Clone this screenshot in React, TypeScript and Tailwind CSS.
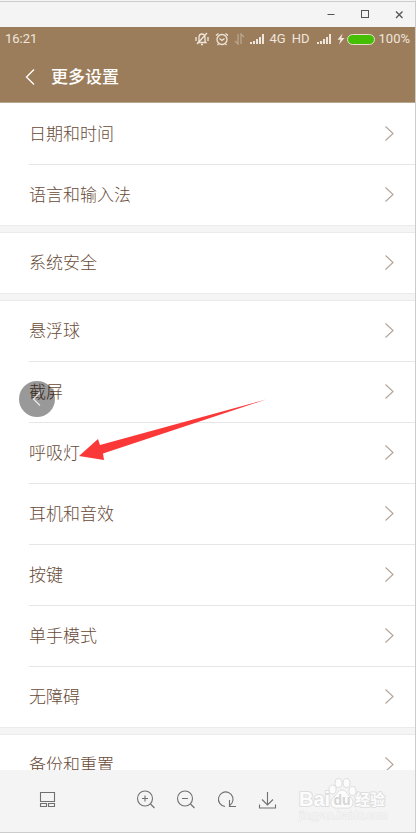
import type { ReactNode } from "react";

const groups = [
  ["日期和时间", "语言和输入法"],
  ["系统安全"],
  ["悬浮球", "截屏", "呼吸灯", "耳机和音效", "按键", "单手模式", "无障碍"],
  ["备份和重置"]
];

function WindowBar() {
  return (
    <div className="flex h-[26px] shrink-0 items-center justify-end border-t border-[#cccccc] bg-[#f4f4f4] pr-2 text-[#555555]">
      <button type="button" aria-label="Minimize" className="mr-[18px]">
        <svg className="h-4 w-4" viewBox="0 0 16 16" fill="none" stroke="currentColor">
          <path d="M4.5 7.5h7" />
        </svg>
      </button>
      <button type="button" aria-label="Maximize" className="mr-[18px]">
        <svg className="h-4 w-4" viewBox="0 0 16 16" fill="none" stroke="currentColor">
          <rect x="4.5" y="3.5" width="7" height="7" />
        </svg>
      </button>
      <button type="button" aria-label="Close">
        <svg className="h-4 w-4" viewBox="0 0 16 16" fill="none" stroke="currentColor" strokeWidth="1.3">
          <path d="m5 4.5 6.500 6.500M11.500 4.500 5 11" />
        </svg>
      </button>
    </div>
  );
}

function Signal() {
  return (
    <svg className="h-3 w-[15px]" viewBox="0 0 15 12" fill="currentColor">
      <path d="M0 9h2v2H0zM3 8h2v3H3zM6 6h2v5H6zM9 4h2v7H9zM12 1h2v10h-2z" />
    </svg>
  );
}

function StatusBar() {
  return (
    <div className="flex h-6 items-center pl-[5px] pr-[5px] text-[13px] text-[#efe6db]">
      <span>16:21</span>
      <div className="ml-auto flex items-center">
        <svg className="h-[14px] w-[14px]" viewBox="0 0 14 14" fill="none" stroke="currentColor" strokeWidth="1.3">
          <path d="M3 10.5h8L10 9V5.500C10 3.500 9 2 7 2S4 3.500 4 5.500V9l-1 1.500ZM6 12.500h2M12 1 2 12M1 5v4M13 5v4" />
        </svg>
        <svg className="ml-[6px] h-[14px] w-[14px]" viewBox="0 0 14 14" fill="none" stroke="currentColor" strokeWidth="1.3">
          <circle cx="7" cy="7.500" r="5" />
          <path d="M4.500 6.500 7 8.500l2.500-2M1 3.500 3.500 1.500M13 3.500l-2.500-2M3.500 12l-1 1M10.500 12l1 1" />
        </svg>
        <svg className="ml-[5px] h-3 w-[11px] opacity-40" viewBox="0 0 11 12" fill="none" stroke="currentColor" strokeWidth="1.3">
          <path d="M4 1v10L1 8M7 11V1l3 3" />
        </svg>
        <span className="ml-[5px]">
          <Signal />
        </span>
        <span className="ml-[5px]">4G</span>
        <span className="ml-1.5">HD</span>
        <span className="ml-[7px]">
          <Signal />
        </span>
        <svg className="ml-[5px] h-3 w-[8px]" viewBox="0 0 8 12" fill="currentColor">
          <path d="M5.500 0.500 0.500 6.800h3L2 11.500l5.500-6.500H4.400L5.500 0.500Z" />
        </svg>
        <span className="ml-0.5 h-[11px] w-7 rounded-full border border-[#e8dccd] bg-[#45bf04]" />
        <span className="ml-1">100%</span>
      </div>
    </div>
  );
}

function Row({ label, children }: { label: string; children?: ReactNode }) {
  return (
    <li className="relative ml-[29px] border-b border-[#e6e6e6] last:border-b-0">
      <a href="#" className="flex h-[60px] items-center justify-between pr-5">
        <span className="pt-0.5">{label}</span>
        <svg className="h-4 w-[11px] text-[#b5a69b]" viewBox="0 0 11 16" fill="none" stroke="currentColor" strokeWidth="1.2">
          <path d="m1.500 0.500 7.500 7-7.500 7" />
        </svg>
      </a>
      {children}
    </li>
  );
}

function FloatingBall() {
  return (
    <button
      type="button"
      aria-label="Back"
      className="absolute -left-2.5 top-[19px] flex h-9 w-9 items-center justify-center rounded-full bg-black/40 text-white/80"
    >
      <svg className="h-4 w-4" viewBox="0 0 16 16" fill="none" stroke="currentColor" strokeWidth="1.2">
        <path d="M11 1.500 4.500 8l6.500 6.500" />
      </svg>
    </button>
  );
}

function Arrow() {
  return (
    <svg className="pointer-events-none absolute left-[50px] -top-6 z-10 h-[62px] w-[188px]" viewBox="0 0 188 62" fill="#fb3838">
      <path d="M0 57 19 40l2 6L187 0.500 24 54.500l1 6.500Z" />
    </svg>
  );
}

function ToolButton({ label, children }: { label: string; children: ReactNode }) {
  return (
    <button type="button" aria-label={label} className="h-6 w-6">
      <svg className="h-6 w-6" viewBox="0 0 24 24" fill="none" stroke="currentColor" strokeWidth="1.1">
        {children}
      </svg>
    </button>
  );
}

function Watermark() {
  return (
    <svg
      className="h-[50px] w-[94px] font-['Liberation_Sans','Noto_Sans_CJK_SC',sans-serif]"
      viewBox="0 0 94 50"
      fill="#fcfcfc"
      stroke="#dedede"
      strokeWidth="2"
      strokeLinejoin="round"
    >
      <text x="1" y="30" fontSize="20" fontWeight="700" paintOrder="stroke">Bai</text>
      <g strokeWidth="1">
        <ellipse cx="34.500" cy="13.500" rx="3.500" ry="4.500" />
        <ellipse cx="40.500" cy="7" rx="3.500" ry="4.500" />
        <ellipse cx="48.500" cy="7" rx="3.500" ry="4.500" />
        <ellipse cx="54.500" cy="15" rx="3.500" ry="4.500" />
        <path d="M44 14c4 0 5 4 8 7 3 2 4 6 2 9-2 3-6 2-10 2s-8 1-10-2c-2-3-1-7 2-9 3-3 4-7 8-7Z" />
      </g>
      <text x="35.500" y="29" fontSize="14" fontWeight="700" fill="#d6d6d6" stroke="none">du</text>
      <text x="57" y="29" fontSize="15" fontWeight="700" paintOrder="stroke">经验</text>
      <text x="1" y="43" fontSize="11" strokeWidth="1" paintOrder="stroke" fill="#f8f8f8" stroke="#e6e6e6">
        jingyan.baidu.com
      </text>
    </svg>
  );
}

function Toolbar() {
  return (
    <footer className="flex h-[63px] shrink-0 items-center border-b border-[#cccccc] bg-[#f4f4f4] pl-[35px] pr-[23px] text-[#707070]">
      <ToolButton label="Layout">
        <path d="M5.500 3.500h14v9h-14zM5.500 14.500h6v3h-6zM13.500 14.500h6v3h-6z" />
      </ToolButton>
      <div className="ml-[75px] flex gap-4">
        <ToolButton label="Zoom in">
          <circle cx="11" cy="9.500" r="7.500" />
          <path d="m16.500 15 4 4M8 9.500h6M11 6.500v6" />
        </ToolButton>
        <ToolButton label="Zoom out">
          <circle cx="11" cy="9.500" r="7.500" />
          <path d="m16.500 15 4 4M8 9.500h6" />
        </ToolButton>
        <ToolButton label="Rotate">
          <path d="M11 17.500a7.300 7.300 0 1 1 7-3.500l-3 3.500M15.500 11v6.500h6.500" />
        </ToolButton>
        <ToolButton label="Download">
          <path d="M13.500 3v13M8 10.500l5.500 5.500 5.500-5.500M5.500 15.500v3.500h16v-3.500" />
        </ToolButton>
      </div>
      <div className="ml-auto">
        <Watermark />
      </div>
    </footer>
  );
}

export default function App() {
  return (
    <div className="flex h-screen flex-col border-r border-t border-r-[#cccccc] border-t-[#f4f4f4] bg-white font-['Roboto','Noto_Sans_CJK_SC',sans-serif]">
      <WindowBar />
      <header className="h-[76px] shrink-0 border-b border-[#b9a68f] bg-[#9b7d5b]">
        <StatusBar />
        <div className="flex h-[51px] items-center pl-6 text-white">
          <button type="button" aria-label="Back">
            <svg className="h-4 w-3" viewBox="0 0 12 16" fill="none" stroke="currentColor" strokeWidth="1.3">
              <path d="M10 0.500 2.500 8l7.500 7.500" />
            </svg>
          </button>
          <h1 className="ml-[15px] pt-0.5 text-[17px] font-medium">更多设置</h1>
        </div>
      </header>
      <main className="min-h-0 flex-1 overflow-hidden pt-px text-[17px] font-light text-[#684b38]">
        {groups.map((group, i) => (
          <section key={group[0]}>
            {i > 0 && <div className="h-2 border-y border-[#ebebeb] bg-[#f5f5f5]" />}
            <ul>
              {group.map((label) => (
                <Row key={label} label={label}>
                  {label === "截屏" && <FloatingBall />}
                  {label === "呼吸灯" && <Arrow />}
                </Row>
              ))}
            </ul>
          </section>
        ))}
      </main>
      <Toolbar />
    </div>
  );
}
